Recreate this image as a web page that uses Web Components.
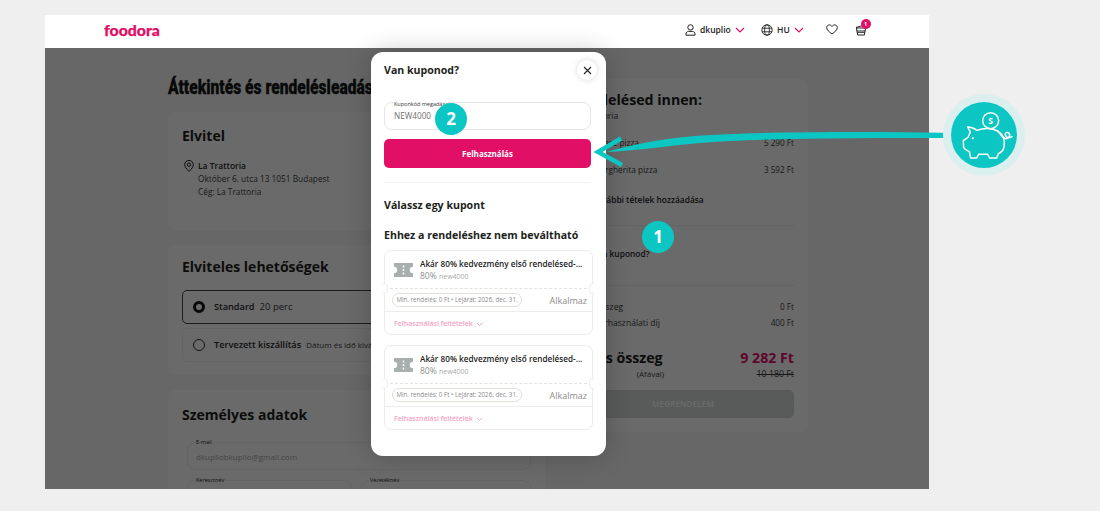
<!DOCTYPE html>
<html lang="hu">
<head>
<meta charset="utf-8">
<title>foodora</title>
<style>
  html, body { margin: 0; height: 511px; overflow: hidden; background: #efefef; }
  body { font-family: "Open Sans", "Liberation Sans", sans-serif; color: #1d1f20; position: relative; }
  #stage { padding: 15px 0 0 45px; }
</style>
</head>
<body>
<div id="stage">
  <fd-frame>
    <fd-header slot="header" user="dkuplio" lang="HU" count="1"></fd-header>

    <fd-heading slot="title">Áttekintés és rendelésleadás</fd-heading>

    <fd-card slot="left" heading="Elvitel" top="14" bottom="32" gap="13">
      <fd-address name="La Trattoria" line="Október 6. utca 13 1051 Budapest" company="Cég: La Trattoria"></fd-address>
    </fd-card>
    <fd-card slot="left" heading="Elviteles lehetőségek" top="12" bottom="13" gap="13">
      <fd-option checked name="Standard" hint="20 perc"></fd-option>
      <fd-option name="Tervezett kiszállítás" hint="Dátum és idő kiválasztása"></fd-option>
    </fd-card>
    <fd-card slot="left" heading="Személyes adatok" top="15" bottom="20" gap="17">
      <fd-form></fd-form>
    </fd-card>

    <fd-summary slot="right"></fd-summary>

    <fd-modal slot="modal" heading="Van kuponod?">
      <fd-coupon></fd-coupon>
      <fd-coupon></fd-coupon>
    </fd-modal>
  </fd-frame>
</div>
<fd-annotations></fd-annotations>

<script>
  const PINK = '#e10f66';

  // Page frame: header, dimmed checkout behind it, modal on top
  class FdFrame extends HTMLElement {
    constructor() {
      super();
      this.attachShadow({ mode: 'open' });
      this.shadowRoot.innerHTML = `
        <style>
          :host { display: block; width: 884px; height: 474px; position: relative; overflow: hidden; background: #f7f8f8; }
          main { display: grid; grid-template-columns: 377px 250px; column-gap: 13px; padding: 0 0 0 123px; }
          .left { display: flex; flex-direction: column; padding-top: 30px; }
          .stack { display: flex; flex-direction: column; gap: 15px; margin-top: 14px; }
          .right { padding-top: 31px; }
          .dim { position: absolute; inset: 33px 0 0 0; background: rgba(0,0,0,.585); display: flex; justify-content: center; align-items: flex-start; padding-top: 4px; }
        </style>
        <slot name="header"></slot>
        <main>
          <div class="left">
            <slot name="title"></slot>
            <div class="stack"><slot name="left"></slot></div>
          </div>
          <div class="right"><slot name="right"></slot></div>
        </main>
        <div class="dim"><slot name="modal"></slot></div>`;
    }
  }

  class FdHeader extends HTMLElement {
    constructor() {
      super();
      this.attachShadow({ mode: 'open' });
    }
    connectedCallback() {
      const chevron = `<svg class="chev" width="10" height="6" viewBox="0 0 10 6"><path d="M1 1l4 4 4-4" fill="none" stroke="${PINK}" stroke-width="1.2"/></svg>`;
      this.shadowRoot.innerHTML = `
        <style>
          :host { display: flex; align-items: center; box-sizing: border-box; height: 33px; background: #fff; padding: 0 0 4px 59px; font: 600 8.5px/12px "Open Sans", sans-serif; color: #222; }
          .logo { font: 900 15.8px/20px Lato, sans-serif; color: ${PINK}; -webkit-text-stroke: .25px ${PINK}; width: 581px; }
          .item { display: flex; align-items: center; }
          .item svg:first-child { margin-right: 4px; }
          .chev { margin-left: 4px; }
          .user { width: 76px; }
          .lang { width: 65px; }
          .heart { width: 29px; display: flex; }
          .cart { position: relative; display: flex; }
          .cart b { position: absolute; left: 5.5px; top: -5px; width: 10px; height: 10px; border-radius: 50%; background: ${PINK}; color: #fff; font: 700 5.5px/10px "Open Sans", sans-serif; text-align: center; }
        </style>
        <div class="logo">foodora</div>
        <div class="item user">
          <svg width="11" height="12" viewBox="0 0 11 12"><circle cx="5.5" cy="3.4" r="2.7" fill="none" stroke="#222"/><path d="M1 11.2V10c0-1.6 1.2-2.6 2.6-2.6h3.8c1.4 0 2.6 1 2.6 2.6v1.2z" fill="none" stroke="#222"/></svg>
          <span>${this.getAttribute('user')}</span>${chevron}
        </div>
        <div class="item lang">
          <svg width="12" height="12" viewBox="0 0 12 12" fill="none" stroke="#222" stroke-width=".9"><circle cx="6" cy="6" r="5.2"/><ellipse cx="6" cy="6" rx="2.4" ry="5.2"/><path d="M1 4.2h10M1 7.8h10"/></svg>
          <span>${this.getAttribute('lang')}</span>${chevron}
        </div>
        <div class="heart">
          <svg width="12" height="11" viewBox="0 0 12 11"><path d="M6 10C3 7.8.7 6 .7 3.6.7 2 1.900.9 3.300.9 4.400.9 5.400 1.500 6 2.500 6.600 1.500 7.600.9 8.700.9c1.400 0 2.600 1.100 2.600 2.700C11.300 6 9 7.800 6 10z" fill="none" stroke="#222"/></svg>
        </div>
        <div class="cart">
          <svg width="12" height="12" viewBox="0 0 12 12" fill="none" stroke="#222"><path d="M1 3.500 8 1.500M1 4h10M1.500 4l.3 3h8.400l.3-3M2 7l.6 4h6.800l.6-4"/><path d="M2.200 8.500h7.600" stroke-width=".8"/></svg>
          <b>${this.getAttribute('count')}</b>
        </div>`;
    }
  }

  class FdHeading extends HTMLElement {
    constructor() {
      super();
      this.attachShadow({ mode: 'open' });
      this.shadowRoot.innerHTML = `
        <style>
          :host { display: block; font: 900 19.5px/20px Roboto, "Liberation Sans", sans-serif; color: #141617; -webkit-text-stroke: .3px #141617; white-space: nowrap; transform: scaleX(.8); transform-origin: left center; }
        </style><slot></slot>`;
    }
  }

  class FdCard extends HTMLElement {
    constructor() {
      super();
      this.attachShadow({ mode: 'open' });
    }
    connectedCallback() {
      const top = this.getAttribute('top'), bottom = this.getAttribute('bottom'), gap = this.getAttribute('gap');
      this.shadowRoot.innerHTML = `
        <style>
          :host { display: block; background: #fff; border-radius: 8px; padding: ${top}px 14px ${bottom}px; }
          h2 { margin: 0 0 ${gap}px; font: 700 14px/20px "Open Sans", sans-serif; color: #1d1f20; }
          .body { display: flex; flex-direction: column; gap: 4px; }
        </style>
        <h2>${this.getAttribute('heading')}</h2>
        <div class="body"><slot></slot></div>`;
    }
  }

  class FdAddress extends HTMLElement {
    constructor() {
      super();
      this.attachShadow({ mode: 'open' });
    }
    connectedCallback() {
      this.shadowRoot.innerHTML = `
        <style>
          :host { display: flex; gap: 4px; font: 400 8.3px/13px "Open Sans", sans-serif; color: #3a3c3d; padding-left: 2px; }
          b { display: block; font-size: 8.500px; font-weight: 600; color: #26282a; }
          svg { margin-top: 1px; }
        </style>
        <svg width="10" height="12" viewBox="0 0 10 12" fill="none" stroke="#222"><path d="M5 11.400C2.400 8.800.7 6.900.7 4.700a4.300 4.300 0 018.600 0C9.300 6.900 7.600 8.800 5 11.400z"/><circle cx="5" cy="4.700" r="1.700"/></svg>
        <div><b>${this.getAttribute('name')}</b>${this.getAttribute('line')}<br>${this.getAttribute('company')}</div>`;
    }
  }

  class FdOption extends HTMLElement {
    constructor() {
      super();
      this.attachShadow({ mode: 'open' });
    }
    connectedCallback() {
      const on = this.hasAttribute('checked');
      this.shadowRoot.innerHTML = `
        <style>
          :host { display: flex; align-items: center; height: 34px; box-sizing: border-box; padding-left: 10px; border-radius: 5px; border: 1px solid ${on ? '#444' : '#f1f1f1'}; font: 400 9px/12px "Open Sans", sans-serif; color: #3a3c3d; }
          .r { width: 12px; height: 12px; box-sizing: border-box; border-radius: 50%; border: ${on ? '3.500px solid #111' : '1px solid #333'}; margin-right: 9px; }
          b { font-size: 9.200px; font-weight: 600; color: #26282a; margin-right: 5px; }
          span { font-size: ${on ? 9.500 : 8}px; white-space: nowrap; }
        </style>
        <div class="r"></div><b>${this.getAttribute('name')}</b><span>${this.getAttribute('hint')}</span>`;
    }
  }

  class FdForm extends HTMLElement {
    constructor() {
      super();
      this.attachShadow({ mode: 'open' });
      const field = (label, value) => `<div class="f"><label>${label}</label>${value}</div>`;
      this.shadowRoot.innerHTML = `
        <style>
          :host { display: grid; grid-template-columns: 165px 1fr; gap: 10px 9px; padding: 0 0 0 5px; font: 400 8px/12px "Open Sans", sans-serif; color: #a8a8a8; }
          .f { position: relative; height: 28px; box-sizing: border-box; border: 1px solid #f0f0f0; border-radius: 8px; padding: 8px 8px 0; }
          .f.w { grid-column: 1 / 3; }
          label { position: absolute; left: 8px; top: -4px; font-size: 5.500px; line-height: 7px; color: #222; background: #fff; }
        </style>
        <div class="f w"><label>E-mail</label>dkupliobkuplio@gmail.com</div>
        ${field('Keresztnév', '')}
        ${field('Vezetéknév', '')}`;
    }
  }

  // Order summary column on the right
  class FdSummary extends HTMLElement {
    constructor() {
      super();
      this.attachShadow({ mode: 'open' });
      this.shadowRoot.innerHTML = `
        <style>
          :host { display: block; box-sizing: border-box; width: 250px; height: 353px; background: #fff; border-radius: 8px; padding: 11px 14px 14px; font: 400 8.6px/12px "Open Sans", sans-serif; color: #3a3c3d; }
          h2 { margin: 0; font: 700 14.2px/20px "Open Sans", sans-serif; color: #1d1f20; }
          .row { display: flex; justify-content: space-between; }
          .row.item { padding-left: 21px; font-size: 8.300px; }
          .row.fee { padding-left: 6px; }
          .val { font-size: 8.200px; }
          .semi { font-weight: 600; color: #26282a; font-size: 8.400px; padding-left: 20px; }
          hr { border: 0; height: 1px; background: #efefef; margin: 0; }
          .total { font: 700 14.2px/20px "Open Sans", sans-serif; color: #1d1f20; }
          .total span:last-child { color: #e10f66; }
          .small { font-size: 8px; width: 92px; text-align: right; }
          s { font-size: 8.800px; }
          .btn { height: 28px; margin-top: 10px; border-radius: 5px; background: #d6dcdb; color: #fff; font-size: 8px; font-weight: 600; display: flex; align-items: center; justify-content: center; letter-spacing: .2px; }
        </style>
        <h2>Rendelésed innen:</h2>
        <div>La Trattoria</div>
        <div class="row item" style="margin-top:15px;padding-left:17px"><span>Cheese pizza</span><span class="val">5 290 Ft</span></div>
        <div class="row item" style="margin-top:15px"><span>Margherita pizza</span><span class="val">3 592 Ft</span></div>
        <div class="semi" style="margin-top:18px">További tételek hozzáadása</div>
        <hr style="margin-top:19px">
        <div class="semi" style="margin-top:22px">Van kuponod?</div>
        <hr style="margin-top:25px">
        <div class="row fee" style="margin-top:15px"><span>Részösszeg</span><span class="val">0 Ft</span></div>
        <div class="row fee" style="margin-top:4px"><span>Szerverhasználati díj</span><span class="val">400 Ft</span></div>
        <div class="row total" style="margin-top:19px"><span>Teljes összeg</span><span>9 282 Ft</span></div>
        <div class="row"><span class="small">(Áfával)</span><s>10 180 Ft</s></div>
        <div class="btn">MEGRENDELEM</div>`;
    }
  }

  class FdModal extends HTMLElement {
    constructor() {
      super();
      this.attachShadow({ mode: 'open' });
    }
    connectedCallback() {
      this.shadowRoot.innerHTML = `
        <style>
          :host { display: block; box-sizing: border-box; width: 235px; height: 404px; margin-left: 3px; background: #fff; border-radius: 12px; padding: 8px 12px 0 13px; box-shadow: 0 0 26px rgba(0,0,0,.22); font-family: "Open Sans", sans-serif; color: #1d1f20; }
          .head { display: flex; justify-content: space-between; align-items: center; height: 20px; }
          h3 { margin: 0; font: 700 10.600px/18px "Open Sans", sans-serif; white-space: nowrap; }
          h3.mt1 { margin-top: 13px; }
          h3.mt2 { margin-top: 12px; margin-bottom: 6px; }
          .close { width: 20px; height: 20px; border-radius: 50%; background: #fff; box-shadow: 0 0 6px rgba(0,0,0,.16); display: flex; align-items: center; justify-content: center; margin-right: -3px; }
          .input { position: relative; height: 28px; box-sizing: border-box; width: 207px; margin-top: 22px; border: 1px solid #e7e7e7; border-radius: 8px; padding: 7px 9px; font-size: 8.200px; line-height: 12px; color: #6f6f6f; }
          .input label { position: absolute; left: 9px; top: -2px; font-size: 5.500px; line-height: 7px; color: #333; background: #fff; }
          .btn { width: 207px; height: 29px; margin-top: 9px; border-radius: 5px; background: ${PINK}; color: #fff; font-size: 8px; font-weight: 700; display: flex; align-items: center; justify-content: center; }
          hr { width: 207px; border: 0; height: 1px; background: #efefef; margin: 14px 0 0; }
          .list { display: flex; flex-direction: column; gap: 10px; }
        </style>
        <div class="head">
          <h3>${this.getAttribute('heading')}</h3>
          <div class="close"><svg width="9" height="9" viewBox="0 0 9 9"><path d="M1 1l7 7M8 1L1 8" stroke="#222" stroke-width="1.100"/></svg></div>
        </div>
        <div class="input"><label>Kuponkód megadása</label>NEW4000</div>
        <div class="btn">Felhasználás</div>
        <hr>
        <h3 class="mt1">Válassz egy kupont</h3>
        <h3 class="mt2">Ehhez a rendeléshez nem beváltható</h3>
        <div class="list"><slot></slot></div>`;
    }
  }

  class FdCoupon extends HTMLElement {
    constructor() {
      super();
      this.attachShadow({ mode: 'open' });
      this.shadowRoot.innerHTML = `
        <style>
          :host { display: block; position: relative; width: 209px; height: 85px; box-sizing: border-box; border: 1px solid #ececec; border-radius: 7px; font-family: "Open Sans", sans-serif; }
          .top { display: flex; height: 38px; box-sizing: border-box; padding: 7px 0 0 9px; border-bottom: 1px dashed #e2e2e2; }
          .top svg { margin: 4px 7px 0 0; flex: none; }
          .t { font-size: 8.200px; line-height: 12px; font-weight: 600; color: #222; white-space: nowrap; }
          .s { font-size: 8.500px; line-height: 12px; color: #8d9090; }
          .s small { font-size: 7px; color: #a9abab; }
          .mid { display: flex; justify-content: space-between; align-items: center; height: 23px; box-sizing: border-box; padding: 0 5px 0 7px; border-bottom: 1px solid #ececec; }
          .pill { width: 130px; height: 14px; box-sizing: border-box; border: 1px solid #e2e0da; border-radius: 7px; font-size: 6.200px; line-height: 12px; color: #8a8a8a; text-align: center; white-space: nowrap; }
          .go { font-size: 9px; color: #8c8c8c; }
          .link { display: flex; align-items: center; gap: 3px; padding: 6px 0 0 9px; font-size: 7px; line-height: 12px; font-weight: 600; color: #f4a3c5; }
          .notch { position: absolute; top: 32px; width: 7px; height: 11px; background: #fff; border: 1px solid #ececec; border-radius: 50%; box-sizing: border-box; }
          .notch.l { left: -4px; border-left-color: #fff; }
          .notch.r { right: -4px; border-right-color: #fff; }
        </style>
        <div class="top">
          <svg width="19" height="16" viewBox="0 0 19 16"><path d="M0 1h19v3.800a3 3 0 000 6.400V15H0v-3.800a3 3 0 000-6.400z" fill="#a9afae"/><path d="M9.500 3.500v9" stroke="#fff" stroke-width="1.500" stroke-dasharray="2 1.500"/></svg>
          <div>
            <div class="t">Akár 80% kedvezmény első rendelésed-...</div>
            <div class="s">80% <small>new4000</small></div>
          </div>
        </div>
        <div class="mid">
          <div class="pill">Min. rendelés: 0 Ft • Lejárat: 2026. dec. 31.</div>
          <div class="go">Alkalmaz</div>
        </div>
        <div class="link">Felhasználási feltételek
          <svg width="7" height="5" viewBox="0 0 7 5"><path d="M1 1l2.500 2.500L6 1" fill="none" stroke="#f4a3c5" stroke-width="1"/></svg>
        </div>
        <div class="notch l"></div><div class="notch r"></div>`;
    }
  }

  // Teal tutorial marks drawn over the screenshot: arrow, piggy bank, step numbers
  class FdAnnotations extends HTMLElement {
    constructor() {
      super();
      this.attachShadow({ mode: 'open' });
      this.shadowRoot.innerHTML = `
        <style>
          :host { position: absolute; left: 0; top: 0; width: 1100px; height: 511px; pointer-events: none; }
          svg { position: absolute; left: 0; top: 0; }
          .step { position: absolute; width: 32px; height: 32px; border-radius: 50%; background: #0cc6c4; color: #fff; font: 700 17px/32px "Open Sans", sans-serif; text-align: center; }
        </style>
        <svg width="1100" height="511" viewBox="0 0 1100 511">
          <path d="M950 133C860 131 750 132 695 136C660 139 630 145 606 152C635 151 665 146 700 143C760 138 860 138 950 138z" fill="#0cc6c4"/>
          <path d="M621 138.500L598 152l24 13" fill="none" stroke="#0cc6c4" stroke-width="4.500"/>
          <circle cx="984" cy="135" r="41" fill="#dcefef"/>
          <circle cx="984" cy="135" r="33" fill="#0cc6c4"/>
          <g transform="translate(930 85) scale(.3333)" fill="none" stroke="#fff" stroke-width="4.500" stroke-linejoin="round" stroke-linecap="round">
            <circle cx="182" cy="107" r="24"/>
            <text x="182" y="116" fill="#fff" stroke="none" font-family="Open Sans" font-weight="700" font-size="26" text-anchor="middle">S</text>
            <path d="M113 125C124 127 134 130 141 136C160 128 186 128 203 138C218 148 226 166 222 186C220 196 212 203 205 206L200 219H179L173 208H146L140 219H122L118 200C110 197 104 193 101 188L100 167C105 163 110 161 114 157C117 152 118 146 121 141C118 136 115 131 113 125z"/>
            <path d="M203 138C213 148 222 166 233 160C244 154 238 139 229 143C221 148 230 165 246 155"/>
            <path d="M128 160h.5" stroke-width="6"/>
          </g>
        </svg>
        <div class="step" style="left:435px;top:103px">2</div>
        <div class="step" style="left:642px;top:221px">1</div>`;
    }
  }

  customElements.define('fd-frame', FdFrame);
  customElements.define('fd-header', FdHeader);
  customElements.define('fd-heading', FdHeading);
  customElements.define('fd-card', FdCard);
  customElements.define('fd-address', FdAddress);
  customElements.define('fd-option', FdOption);
  customElements.define('fd-form', FdForm);
  customElements.define('fd-summary', FdSummary);
  customElements.define('fd-modal', FdModal);
  customElements.define('fd-coupon', FdCoupon);
  customElements.define('fd-annotations', FdAnnotations);
</script>
</body>
</html>
